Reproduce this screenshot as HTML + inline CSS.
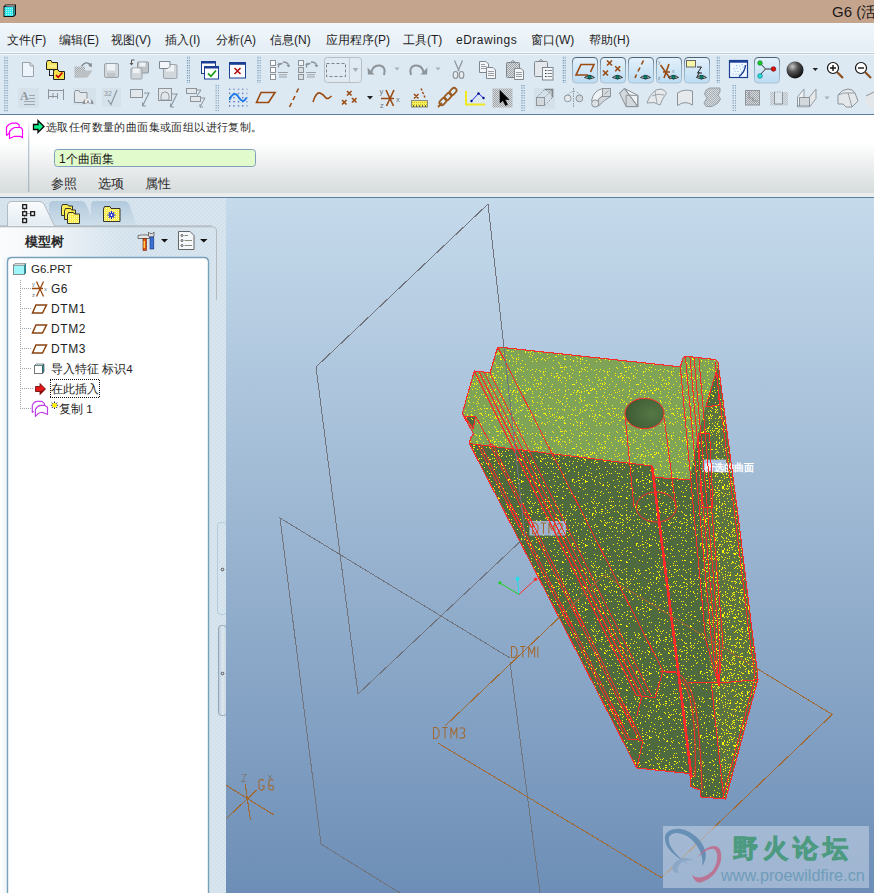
<!DOCTYPE html>
<html><head><meta charset="utf-8">
<style>
*{margin:0;padding:0;box-sizing:border-box}
html,body{width:874px;height:893px;overflow:hidden;background:#fff;font-family:"Liberation Sans",sans-serif;font-size:12px;color:#1e1e1e}
.abs{position:absolute}
#title{left:0;top:0;width:874px;height:23px;background:#c4a48d}
#title span{position:absolute;left:832px;top:3px;font-size:15px;line-height:18px;color:#1a1a1a;white-space:nowrap}
#menu{left:0;top:23px;width:874px;height:29px;background:linear-gradient(#f1f8fc,#e5edf5)}
#menu span{position:absolute;top:10px;font-size:12px;line-height:14px;color:#1e1e1e;white-space:nowrap}
#tb{left:0;top:52px;width:874px;height:63px;background:linear-gradient(#fbfdfe 0,#fbfdfe 1px,#b6cbd9 1px,#b6cbd9 2px,#f4f8fb 2px,#f4f8fb 3px,#dce8f2 3px);border-bottom:1px solid #5b7f9e}
#dash{left:0;top:115px;width:874px;height:83px;background:linear-gradient(#fff 0,#fff 28px,#d6dbdc 78px,#ebeded 78px,#ebeded 82px,#5b7f9e 82px)}
#panel{left:0;top:198px;width:226px;height:695px;background:repeating-linear-gradient(-45deg,#d4e2ec 0,#d4e2ec 4.2px,#e2ecf3 4.2px,#e2ecf3 5.6px)}
#view{left:226px;top:198px;width:648px;height:695px;background:linear-gradient(#c5daeb,#6d8eb6)}
</style></head><body>
<div id="title" class="abs"><span>G6 (活</span></div>
<div id="menu" class="abs">
<span style="left:7px">文件(F)</span>
<span style="left:59px">编辑(E)</span>
<span style="left:111px">视图(V)</span>
<span style="left:165px">插入(I)</span>
<span style="left:216px">分析(A)</span>
<span style="left:270px">信息(N)</span>
<span style="left:326px">应用程序(P)</span>
<span style="left:403px">工具(T)</span>
<span style="left:456px;letter-spacing:0.5px">eDrawings</span>
<span style="left:531px">窗口(W)</span>
<span style="left:589px">帮助(H)</span>
</div>
<div id="tb" class="abs"></div>
<div id="dash" class="abs"></div>
<div id="panel" class="abs"></div>
<div id="view" class="abs"></div>

<svg class="abs" style="left:0;top:0" width="874" height="198" viewBox="0 0 874 198">
<defs>
<pattern id="grip" width="2.2" height="2.5" patternUnits="userSpaceOnUse"><rect x="0" y="0" width="1.1" height="1.1" fill="#5f87a8"/></pattern>
<pattern id="hatch" width="2" height="2" patternUnits="userSpaceOnUse"><rect width="2" height="2" fill="#d6dadd"/><rect width="1" height="1" fill="#9ea4a9"/><rect x="1" y="1" width="1" height="1" fill="#9ea4a9"/></pattern>
<pattern id="ydot" width="2" height="2" patternUnits="userSpaceOnUse"><rect width="2" height="2" fill="#f4ef60"/><rect width="1" height="1" fill="#d8c820"/></pattern>
<linearGradient id="tog" x1="0" y1="0" x2="0" y2="1"><stop offset="0" stop-color="#e4f1fb"/><stop offset="1" stop-color="#bcdcf3"/></linearGradient>
<radialGradient id="sph" cx="0.35" cy="0.3" r="0.7"><stop offset="0" stop-color="#c8c8c8"/><stop offset="0.45" stop-color="#555"/><stop offset="1" stop-color="#111"/></radialGradient>
</defs>
<!-- title icon -->
<pattern id="cyd" width="2" height="2" patternUnits="userSpaceOnUse"><rect width="2" height="2" fill="#30e8ee"/><rect width="1" height="1" fill="#a8f8fa"/></pattern>
<g><path d="M3.5,6.5 L5.5,4.5 H16 V15 L13.5,17 H3.5 Z" fill="#111"/><rect x="4.5" y="7" width="9" height="9" fill="url(#cyd)"/><path d="M5,6.3 L6,5.5 H15 L13.8,6.5 Z" fill="#fff"/><path d="M14,7 L15,6 V14.5 L14,15.5 Z" fill="#2a9aa0"/></g>
<!-- grippers -->
<rect x="4" y="56" width="4.4" height="56" fill="url(#grip)"/>
<rect x="186" y="56" width="4" height="27" fill="url(#grip)"/>
<rect x="257" y="56" width="4" height="27" fill="url(#grip)"/>
<rect x="562" y="56" width="4" height="27" fill="url(#grip)"/>
<rect x="716" y="56" width="4" height="27" fill="url(#grip)"/>
<rect x="215" y="85" width="4" height="26" fill="url(#grip)"/>
<rect x="521" y="85" width="4" height="26" fill="url(#grip)"/>
<rect x="732" y="85" width="4" height="26" fill="url(#grip)"/>
<!-- ROW 1 -->
<g fill="none" stroke-linejoin="round">
<path d="M22.5,62.5 H30 L33.5,66 V76.5 H22.5 Z" fill="#eef4fb" stroke="#9aa2a8"/>
<path d="M30,62.5 V66 H33.5" stroke="#9aa2a8"/>
</g>
<g stroke="#222" stroke-width="1">
<path d="M46.5,62.5 L47.5,60.5 H51 L52,62.5 H57.5 V69.5 H46.5 Z" fill="#f5e35a"/>
<rect x="48.5" y="64.5" width="8" height="3" fill="#f8ee90" stroke="none"/>
<rect x="49.5" y="69.5" width="4" height="6" fill="#e6eef5"/>
<path d="M53.5,71.5 L54.5,69.5 H58 L59,71.5 H64.5 V79.5 H53.5 Z" fill="#f7e24a"/>
</g>
<path d="M56,75 L58.2,77.3 L62.5,72.5" fill="none" stroke="#c80000" stroke-width="1.6"/>
<g>
<path d="M74.5,66.5 H85 V77.5 H74.5 Z" fill="url(#hatch)"/>
<path d="M74.5,77.5 L78.5,70.5 H92.5 L87.5,77.5 Z" fill="#bcc1c5"/>
<path d="M81.5,66 Q86,60.5 90.5,64.5" fill="none" stroke="#7f868c" stroke-width="1.3"/>
<path d="M88,65 L92,63 L91.5,67.5 Z" fill="#7f868c"/>
</g>
<g>
<rect x="104.5" y="63.5" width="14" height="14" rx="1.5" fill="#d2d7db" stroke="#9ba2a8"/>
<rect x="107" y="64" width="8" height="6.5" fill="#eef3f8"/>
<rect x="107" y="73" width="8.5" height="4" fill="#c0c5ca"/>
</g>
<g>
<rect x="137.5" y="62" width="11" height="11" rx="1" fill="#bfc4c9" stroke="#8f969c"/>
<rect x="139.5" y="62.5" width="6" height="4" fill="#eef3f8"/>
<rect x="131" y="68" width="11" height="11" rx="1" fill="#d2d7db" stroke="#9ba2a8"/>
<rect x="133" y="68.5" width="6.5" height="4.5" fill="#eef3f8"/>
<path d="M134.5,60 H131.5 V64" fill="none" stroke="#555" stroke-width="1"/>
<path d="M129.5,63 L131.5,65.5 L133.5,63 Z" fill="#555"/>
</g>
<g>
<rect x="163.5" y="64.5" width="13.5" height="14" rx="1.5" fill="#d2d7db" stroke="#9ba2a8"/>
<rect x="166" y="65" width="8" height="6.5" fill="#eef3f8"/>
<path d="M159.5,61.5 H170 V66.5 L168,68.5 H159.5 Z" fill="#f2f6fa" stroke="#7f868c"/>
</g>
<g>
<rect x="201.5" y="61.5" width="14" height="12" fill="#fff" stroke="#1b3f94"/>
<rect x="201.5" y="61.5" width="14" height="2" fill="#1b3f94"/>
<rect x="204.5" y="66.5" width="14" height="12.5" fill="#fff" stroke="#1b3f94"/>
<rect x="204.5" y="66.5" width="14" height="2" fill="#1b3f94"/>
<path d="M208,73.5 L211,76.3 L216,70.5" fill="none" stroke="#1aa01a" stroke-width="1.8"/>
</g>
<g>
<rect x="229.5" y="62.5" width="16" height="15.5" fill="#fff" stroke="#1b3f94"/>
<rect x="229.5" y="62.5" width="16" height="2.3" fill="#1b3f94"/>
<path d="M234.5,68 L240.5,74 M240.5,68 L234.5,74" stroke="#b01010" stroke-width="1.6"/>
</g>
<g fill="#fff" stroke="#8d949a">
<rect x="270.5" y="60.5" width="5" height="5"/><rect x="270.5" y="67.5" width="5" height="5"/><rect x="270.5" y="74.5" width="5" height="5"/>
<path d="M278,72.5 H288 M279,74.8 H287 M279,77 H287" stroke="#9aa1a6"/>
<path d="M278.5,67.5 Q278,63.5 282.5,63.5 M283,62 Q288,62 288.5,65.5" fill="none" stroke="#8d949a" stroke-width="1.3"/>
<path d="M277,65 L279,62.5 L281,65 Z M286.5,65 L288.5,67.5 L290.5,65Z" fill="#8d949a" stroke="none"/>
</g>
<g fill="#d8dde1" stroke="#8d949a">
<rect x="298.5" y="60.5" width="5" height="5" fill="#f2f5f8"/><rect x="298.5" y="67.5" width="5" height="5"/><rect x="298.5" y="74.5" width="5" height="5"/>
<path d="M306,72.5 H316 M307,74.8 H315 M307,77 H315" stroke="#9aa1a6"/>
<path d="M306.5,67.5 Q306,63.5 310.5,63.5 M311,62 Q316,62 316.5,65.5" fill="none" stroke="#8d949a" stroke-width="1.3"/>
<path d="M305,65 L307,62.5 L309,65 Z M314.5,65 L316.5,67.5 L318.5,65Z" fill="#8d949a" stroke="none"/>
</g>
<g>
<rect x="324.5" y="57.5" width="37" height="25" rx="3" fill="#dfeaf3" stroke="#b7bec4"/>
<rect x="326.5" y="63.5" width="19" height="13" fill="none" stroke="#7d848a" stroke-dasharray="3,2"/>
<path d="M349.5,58 V82" stroke="#c3c9ce"/>
<path d="M352.5,68 H358.5 L355.5,72 Z" fill="#a9b0b5"/>
</g>
<g fill="#8d949a">
<path d="M371,73 Q373,64.5 380,65.5 Q386.5,67 384,75" fill="none" stroke="#8d949a" stroke-width="2"/>
<path d="M367.5,67.5 L368,74.5 L374.5,74.5 Z"/>
<path d="M394.5,67.5 H399.5 L397,70.5 Z" fill="#a9b0b5"/>
<path d="M424,73 Q422,64.5 415,65.5 Q408.5,67 411,75" fill="none" stroke="#8d949a" stroke-width="2"/>
<path d="M427.5,67.5 L427,74.5 L420.5,74.5 Z"/>
<path d="M435.5,67.5 H440.5 L438,70.5 Z" fill="#a9b0b5"/>
</g>
<g fill="none" stroke="#8d949a" stroke-width="1.2">
<path d="M454.5,60.5 L459,71 M462.5,60.5 L458,71"/>
<ellipse cx="455.5" cy="75" rx="2.3" ry="3.5" fill="#e8ecef"/><ellipse cx="461.5" cy="75" rx="2.3" ry="3.5" fill="#e8ecef"/>
</g>
<g fill="#f4f7fa" stroke="#80878d">
<path d="M479.5,61.5 H486 L488.5,64 V72.5 H479.5 Z"/>
<path d="M481,64.5 H485 M481,66.5 H486.5 M481,68.5 H486.5" fill="none" stroke-width="0.8"/>
<path d="M486.5,67.5 H493 L495.5,70 V78.5 H486.5 Z"/>
<path d="M488,71.5 H494 M488,73.5 H494 M488,75.5 H494" fill="none" stroke-width="0.8"/>
</g>
<g stroke="#80878d">
<rect x="506.5" y="62.5" width="13" height="15" rx="1" fill="url(#hatch)"/>
<path d="M510.5,62.5 L513,60.5 L515.5,62.5 Z" fill="#e8ecef"/>
<path d="M514.5,68.5 H521 L523.5,71 V79.5 H514.5 Z" fill="#f4f7fa"/>
<path d="M516,72.5 H522 M516,74.5 H522 M516,76.5 H522" fill="none" stroke-width="0.8"/>
</g>
<g stroke="#80878d">
<rect x="534.5" y="61.5" width="13" height="15" rx="1" fill="#e4e8ec"/>
<path d="M538.5,61.5 L541,59.5 L543.5,61.5 Z" fill="#e8ecef"/>
<rect x="542.5" y="67.5" width="10.5" height="12.5" fill="#f4f7fa"/>
<path d="M545,70.5 h1.5 M545,73.5 h1.5 M545,76.5 h1.5" stroke="#333" fill="none"/>
<path d="M547.5,70.5 H552 M547.5,73.5 H552 M547.5,76.5 H552" fill="none"/>
</g>
<!-- toggle buttons -->
<linearGradient id="tbs" x1="0" y1="0" x2="0" y2="1"><stop offset="0" stop-color="#4d6474"/><stop offset="0.3" stop-color="#8aa3b6"/><stop offset="1" stop-color="#a9c3d6"/></linearGradient>
<g stroke="url(#tbs)" fill="url(#tog)">
<rect x="572.5" y="57.5" width="25" height="25.5" rx="3.5"/>
<rect x="600.5" y="57.5" width="25" height="25.5" rx="3.5"/>
<rect x="628.5" y="57.5" width="25" height="25.5" rx="3.5"/>
<rect x="656.5" y="57.5" width="25" height="25.5" rx="3.5"/>
<rect x="684.5" y="57.5" width="25" height="25.5" rx="3.5"/>
<rect x="754.5" y="57.5" width="25" height="25.5" rx="3.5"/>
</g>
<g fill="none" stroke="#9a4a10" stroke-width="1.6">
<path d="M588,75 H576 L581,64.5 H594 L590.5,72"/>
<path d="M607,60.5 l5,5 m0,-5 l-5,5 M603,70.5 l5,5 m0,-5 l-5,5 M615.2,66.2 l5,5 m0,-5 l-5,5"/>
<path d="M643.5,60.5 L641.5,64.5 M640,67.5 L638,71.5 M636.5,74.5 L635,78"/>
<path d="M663,72 H670 M660.5,65 L670.5,79 M669,64 L664,78"/>
</g>
<g fill="#7a848a" font-family="Liberation Sans" font-size="5">
<text x="658" y="64">y</text><text x="658" y="80">z</text><text x="672" y="73">x</text>
</g>
<rect x="686.5" y="60.5" width="9" height="6.5" fill="#f8f6a8" stroke="#666"/>
<path d="M697,67 H701.5 L697.5,73 H702 M699.5,72 L697,77" fill="none" stroke="#222" stroke-width="1"/>
<g id="eyes">
<g transform="translate(589.5,77)"><path d="M-5,0.5 Q0,-3.5 5,0.5 Q0,3.5 -5,0.5Z" fill="#d8dde0" stroke="#222" stroke-width="0.9"/><circle r="1.9" fill="#0a7a6a" stroke="#033" stroke-width="0.5"/></g>
<g transform="translate(617.5,77)"><path d="M-5,0.5 Q0,-3.5 5,0.5 Q0,3.5 -5,0.5Z" fill="#d8dde0" stroke="#222" stroke-width="0.9"/><circle r="1.9" fill="#0a7a6a" stroke="#033" stroke-width="0.5"/></g>
<g transform="translate(645.5,77)"><path d="M-5,0.5 Q0,-3.5 5,0.5 Q0,3.5 -5,0.5Z" fill="#d8dde0" stroke="#222" stroke-width="0.9"/><circle r="1.9" fill="#0a7a6a" stroke="#033" stroke-width="0.5"/></g>
<g transform="translate(673.5,77)"><path d="M-5,0.5 Q0,-3.5 5,0.5 Q0,3.5 -5,0.5Z" fill="#d8dde0" stroke="#222" stroke-width="0.9"/><circle r="1.9" fill="#0a7a6a" stroke="#033" stroke-width="0.5"/></g>
<g transform="translate(701.5,77)"><path d="M-5,0.5 Q0,-3.5 5,0.5 Q0,3.5 -5,0.5Z" fill="#d8dde0" stroke="#222" stroke-width="0.9"/><circle r="1.9" fill="#0a7a6a" stroke="#033" stroke-width="0.5"/></g>
</g>
<g>
<rect x="729.5" y="60.5" width="18" height="17" fill="#f2f8ff" stroke="#1b3f94" stroke-width="1.2"/>
<rect x="729.5" y="60.5" width="18" height="2.2" fill="#1b3f94"/>
<g fill="#5aa8e8"><circle cx="733" cy="74" r="0.6"/><circle cx="735" cy="71" r="0.6"/><circle cx="737" cy="68" r="0.6"/><circle cx="739.5" cy="66" r="0.6"/><circle cx="742" cy="64.5" r="0.6"/><circle cx="736" cy="74" r="0.6"/><circle cx="738" cy="71.5" r="0.6"/><circle cx="740.5" cy="69" r="0.6"/><circle cx="743" cy="67" r="0.6"/><circle cx="739" cy="74" r="0.6"/><circle cx="741.5" cy="72" r="0.6"/><circle cx="744" cy="70" r="0.6"/><circle cx="734" cy="68.5" r="0.6"/><circle cx="736.5" cy="65.5" r="0.6"/></g>
<path d="M739,76.5 Q745,72 745.5,65" fill="none" stroke="#1b3f94" stroke-width="1.4"/>
</g>
<g>
<path d="M760,63 L765.5,69 L772.5,69 M765.5,69 L760,75" fill="none" stroke="#333" stroke-width="1"/>
<circle cx="760" cy="63" r="2.3" fill="#1ed01e" stroke="#064" stroke-width="0.6"/>
<circle cx="773.5" cy="69" r="2.3" fill="#e01010" stroke="#600" stroke-width="0.6"/>
<circle cx="760" cy="76" r="2.3" fill="#20e0e0" stroke="#066" stroke-width="0.6"/>
</g>
<circle cx="795" cy="70" r="8.5" fill="url(#sph)"/>
<path d="M812.5,68 H818 L815.3,71 Z" fill="#222"/>
<g fill="#fff" stroke="#111" stroke-width="1.2">
<circle cx="833" cy="68" r="5.5"/><path d="M830,68 H836 M833,65 V71" stroke-width="1.4"/>
<path d="M837,72 L843,78" stroke="#8a5020" stroke-width="2.2"/>
<circle cx="861" cy="68" r="5.5"/><path d="M858,68 H864" stroke-width="1.4"/>
<path d="M865,72 L871,78" stroke="#8a5020" stroke-width="2.2"/>
</g>
<!-- ROW 2 -->
<g>
<rect x="18" y="88" width="21" height="20" fill="#d6e2eb"/>
<text x="20" y="100" font-family="Liberation Serif" font-weight="bold" font-size="12" fill="#8f969b">A</text>
<path d="M29,95.5 H35 M29,98.5 H35 M24,101.5 H35 M24,104.5 H35" stroke="#a0a7ac" stroke-width="1"/>
</g>
<g stroke="#8d949a" stroke-width="1" fill="none">
<path d="M48.5,89 V99 M63.5,89 V100 M48.5,90.5 H63.5 M48.5,96.5 H57.5 M53,93 V98 M57.5,93 V99"/>
</g>
<g>
<rect x="73" y="88" width="23" height="17" fill="#d6e2eb"/>
<path d="M74.5,92.5 L75.5,90.5 H79 L80,92.5 H87 V102.5 H74.5 Z" fill="#e2e7eb" stroke="#8d949a"/>
<path d="M82.5,104 A5.5,5.5 0 0 1 93.5,104 Z" fill="#8d949a"/>
<circle cx="88" cy="101.5" r="3" fill="#f4f6f8"/>
<text x="86.2" y="103.5" font-size="5" fill="#555" font-family="Liberation Sans">A</text>
</g>
<g>
<rect x="102" y="88" width="19" height="19" fill="#d6e2eb"/>
<text x="104" y="96" font-size="7" fill="#8d949a" font-family="Liberation Sans">32</text>
<path d="M108,100 L111,104.5 L117,90" fill="none" stroke="#8d949a" stroke-width="1.2"/>
</g>
<g stroke="#8d949a" fill="#e2e7eb">
<rect x="130.5" y="89.5" width="12" height="8"/>
<path d="M144,93 H149 L142.5,106 M142.5,106 V102.5 M142.5,106 H146" fill="none" stroke-width="1.1"/>
<rect x="158.5" y="88.5" width="13" height="12"/>
<path d="M161,96 a3.5,3.5 0 0 1 8,0 v4 h-8z" fill="none" stroke-width="0.9"/>
<path d="M172,94 H177 L170.5,107 M170.5,107 V103.5 M170.5,107 H174" fill="none" stroke-width="1.1"/>
<rect x="186.5" y="88.5" width="10" height="5"/>
<rect x="190.5" y="96.5" width="10" height="5"/>
<path d="M197,90 H201 L197,96 M201,98 H205 L200,107 M200,107 V104 M200,107 H203" fill="none" stroke-width="1"/>
</g>
<g>
<pattern id="bdot" width="4.4" height="4.2" patternUnits="userSpaceOnUse" x="229" y="88.5"><rect width="1.2" height="1.2" fill="#2a4ab0"/></pattern>
<rect x="229" y="88.5" width="18.5" height="18.5" fill="url(#bdot)"/>
<path d="M229.5,100 Q233,91 237.5,95.5 Q241,101 243,101 Q245,101 246.5,97.5" fill="none" stroke="#1e7ae8" stroke-width="1.8"/>
</g>
<g fill="none" stroke="#9a4a10" stroke-width="1.6">
<path d="M261,92.5 H275 L268.5,102.5 H256.5 Z"/>
<path d="M298.5,88.5 L296.5,92.5 M295,96 L293,100 M291.5,103 L289.5,107"/>
<path d="M313,102 Q316,92 320,93 Q323,94 326,98 Q328,99.5 331.5,96"/>
<path d="M347,91 l4.5,4.5 m0,-4.5 l-4.5,4.5 M342,100 l4.5,4.5 m0,-4.5 l-4.5,4.5 M352,98 l4.5,4.5 m0,-4.5 l-4.5,4.5"/>
<path d="M381,98.5 H394 M386,90 L393.5,106 M394,90 L386.5,106" />
</g>
<path d="M367,96 H373 L370,99.5 Z" fill="#222"/>
<g fill="#6f777d" font-family="Liberation Sans" font-size="7.5"><text x="379.5" y="94">y</text><text x="380" y="108">z</text><text x="396" y="101.5">x</text></g>
<g>
<rect x="411.5" y="100.5" width="16" height="6.5" fill="url(#ydot)" stroke="#777" stroke-width="0.8"/>
<path d="M413.5,107 v-2 M416.5,107 v-2 M419.5,107 v-2 M422.5,107 v-2 M425.5,107 v-2" stroke="#333" stroke-width="0.7"/>
<path d="M414,94 l4.5,4.5 m0,-4.5 l-4.5,4.5 M421,88.5 l1,2 M422.5,92 l1,2 M424,95.5 l1,2" stroke="#9a4a10" stroke-width="1.5" fill="none"/>
</g>
<g fill="none" stroke="#9a5a20" stroke-width="1.8">
<path d="M438,107 L442,103"/><rect x="439" y="99" width="8" height="5" rx="2.5" transform="rotate(-45 443 101.5)"/>
<rect x="444" y="94" width="8" height="5" rx="2.5" transform="rotate(-45 448 96.5)"/>
<rect x="449" y="89" width="8" height="5" rx="2.5" transform="rotate(-45 453 91.5)"/>
</g>
<g>
<path d="M466,91 V104.5 H485" fill="none" stroke="#f0e820" stroke-width="2"/>
<path d="M471.5,101 L478.5,93.5 L483.5,98" fill="none" stroke="#1a2ae0" stroke-width="1"/>
<circle cx="471.5" cy="101" r="1.2" fill="#001080"/><circle cx="478.5" cy="93.5" r="1.2" fill="#001080"/><circle cx="483.5" cy="98" r="1.2" fill="#001080"/>
</g>
<g>
<rect x="492.5" y="88.5" width="20" height="19" fill="url(#hatch)"/>
<path d="M500,90.5 V103 L503,100.5 L505.5,105.5 L507.5,104.5 L505,99.5 L509,99.5 Z" fill="#000" stroke="#000" stroke-width="0.6"/>
</g>
<g stroke="#8d949a" stroke-width="1" fill="#d3d8dc">
<rect x="534" y="88" width="21" height="21" fill="#d5e1ea" stroke="none"/>
<path d="M544.5,89.5 H552.5 V97.5 Z" fill="url(#hatch)" stroke="none" opacity="0.6"/>
<path d="M544.5,89.5 H552.5 V97.5" fill="none" stroke="#7f868c" stroke-width="1.6"/>
<path d="M536.5,97.5 L544.5,89.5 M544.5,105.5 L552.5,97.5 M544.5,97.5 L552.5,89.5" fill="none" stroke-dasharray="1.5,1.5"/>
<rect x="536.5" y="97.5" width="8" height="8"/>
<path d="M573.5,88 V107.5" fill="none" stroke-dasharray="1.5,1"/>
<circle cx="567.7" cy="98.4" r="3.4" fill="#e6eaed"/>
<circle cx="579.4" cy="98.4" r="3.4"/>
<path d="M567.7,95 Q572,90 576.5,92 M577,92.5 Q581,94 580.5,96" fill="none" stroke-dasharray="1.2,1.2"/>
<path d="M591.5,101 Q593,91 602.5,88.5 V96.5 Q597,98 598.5,104 Z" fill="#eef2f5"/>
<path d="M598.5,104 Q597,98 602.5,96.5 H610.5 Q604,100 598.5,106 Z" fill="#d3d8dc"/>
<rect x="602.5" y="88.5" width="8" height="8" fill="#d3d8dc"/>
<path d="M604.5,94.5 L608.5,90.5" fill="none" stroke-width="0.8"/>
<circle cx="595.2" cy="103.5" r="3.6" fill="#dde1e4"/>
<path d="M619.6,93.2 L624.4,88.4 L626.1,95.3 Z" fill="#e4e8eb"/>
<path d="M624.4,88.4 L637.8,95.3 V106.6 Z" fill="#eef2f5"/>
<path d="M619.6,93.2 L626.1,106.6 H637.8 L624.4,88.4 Z" fill="#d3d8dc"/>
<path d="M626.1,95.3 H637.8 V106.6 H626.1 Z M624.4,88.4 L637.8,106.6" fill="none"/>
<path d="M647,103 Q650,94 656,90 L661,89 Q665,90 666.5,93 Q662,99 660,105 Q654,101 647,103 Z" fill="#e6eaed" stroke-width="0.9"/>
<path d="M652,96 Q658,93 664,95 M655,91 Q656,98 657,103" fill="none" stroke-width="0.8"/>
<path d="M677.5,105.5 V93 Q684,88.5 692.5,91 V105 Q685,100 677.5,105.5 Z" fill="#e6eaed" stroke-dasharray="none"/>
<path d="M706,90 L710,88 H720 V92 L718,95 L720.5,99 L718,103 L712,106.5 H706 L704,103 L707,98 L704.5,94 Z" fill="url(#hatch)" opacity="0.85"/>
<rect x="745.5" y="90.5" width="14" height="14.5" fill="url(#hatch)"/>
<path d="M749,92 V98 H753 V101 H758" fill="none" stroke="#8d949a" stroke-width="1.2"/>
<rect x="770" y="92" width="18" height="13.5" fill="url(#hatch)" stroke="none" opacity="0.55"/>
<path d="M774.5,92 V104 H782.5 V92" fill="#dbe5ec" stroke="#8d949a"/>
<path d="M774.5,92 H782.5" stroke-dasharray="1,1.5" fill="none"/>
<path d="M797.5,97 L804,89 V98.5 L797.5,107 Z" fill="#eef2f5" stroke-width="0.9"/>
<path d="M809.5,97 L816,89 V98.5 L809.5,107 Z" fill="#e4e8eb" stroke-width="0.9"/>
<rect x="799.5" y="97.5" width="10" height="8.5" fill="#d3d8dc"/>
<path d="M797.5,107 H809.5 M797.5,97 V107" fill="none" stroke-dasharray="1,1"/>
<path d="M838,95 Q842,89 848,89 Q853,89 855,93 L858,101 L852,107 H846 L843,104 H838 Z" fill="#e4e8eb"/>
<path d="M838,95 Q844,92 848,93 L852,107 M848,93 L855,93" fill="none" stroke-width="0.9"/>
<path d="M866,95 L874,91 V107 H866 Z" fill="#e3e7ea" stroke="none"/>
<path d="M866,96 L874,92" fill="none"/>
</g>
<path d="M824.5,96.5 H829.5 L827,99.5 Z" fill="#a9b0b5"/>
</svg>

<svg class="abs" style="left:0;top:115px" width="260" height="80" viewBox="0 115 260 80">
<defs><linearGradient id="sep" x1="0" y1="0" x2="0" y2="1"><stop offset="0" stop-color="#fff"/><stop offset="0.3" stop-color="#b9c9d6"/><stop offset="1" stop-color="#a9b8c4"/></linearGradient></defs>
<g fill="none" stroke="#ff00ff" stroke-width="1.2" stroke-linejoin="round">
<path d="M6.5,135.5 V127 L8.5,124.8 L11.5,123.2 H17 L19.2,125 V127.3"/>
<path d="M9.5,138.5 V131.5 L11.5,129.3 L14.5,127.5 H20.8 L22.5,129.3 V137.8 L20.5,136.3 H14.5 L11.8,137.5 Z"/>
<path d="M6.5,135.5 L9.5,133"/>
</g>
<rect x="28" y="120" width="1.3" height="72" fill="url(#sep)"/>
<path d="M33.5,124.5 H38 V120.5 L44,126.5 L38,132.5 V129.5 H33.5 Z" fill="#12ee8a" stroke="#000" stroke-width="1.3" stroke-linejoin="miter"/>
<rect x="54.5" y="149.5" width="201" height="17" rx="3" fill="#e2fbcc" stroke="#7e9fb9"/>
</svg>
<div class="abs" style="left:46px;top:120px;font-size:11px;letter-spacing:0.4px;line-height:14px;color:#2a2a2a;white-space:nowrap">选取任何数量的曲面集或面组以进行复制。</div>
<div class="abs" style="left:59px;top:151.5px;font-size:12px;line-height:14px;color:#1a1a1a;white-space:nowrap">1个曲面集</div>
<div class="abs" style="left:51px;top:176px;font-size:13px;line-height:15px;color:#2a2a2a;white-space:nowrap">参照</div>
<div class="abs" style="left:98px;top:176px;font-size:13px;line-height:15px;color:#2a2a2a;white-space:nowrap">选项</div>
<div class="abs" style="left:145px;top:176px;font-size:13px;line-height:15px;color:#2a2a2a;white-space:nowrap">属性</div>

<svg class="abs" style="left:0;top:198px" width="226" height="695" viewBox="0 198 226 695">
<defs>
<linearGradient id="acttab" x1="0" y1="0" x2="0" y2="1"><stop offset="0" stop-color="#fafcfd"/><stop offset="1" stop-color="#e3ecf2"/></linearGradient>
<linearGradient id="inacttab" x1="0" y1="0" x2="0" y2="1"><stop offset="0" stop-color="#b3cadd"/><stop offset="1" stop-color="#cfdfeb"/></linearGradient>
<linearGradient id="hdr" x1="0" y1="0" x2="1" y2="0"><stop offset="0" stop-color="#fbfcfd"/><stop offset="0.25" stop-color="#f4f7f9" stop-opacity="0.9"/><stop offset="0.6" stop-color="#e6eef4" stop-opacity="0"/></linearGradient>
<linearGradient id="lefted" x1="0" y1="0" x2="1" y2="0"><stop offset="0" stop-color="#fff"/><stop offset="1" stop-color="#eef3f7"/></linearGradient>
<linearGradient id="sash2" x1="0" y1="0" x2="1" y2="0"><stop offset="0" stop-color="#b9cbd8"/><stop offset="0.5" stop-color="#dce7ef"/><stop offset="1" stop-color="#c7d7e3"/></linearGradient>
<pattern id="stripe" width="4" height="4" patternUnits="userSpaceOnUse"><rect width="4" height="4" fill="#d2e1ec"/><path d="M0 3h1v1h-1zM1 2h1v1h-1zM2 1h1v1h-1zM3 0h1v1h-1z" fill="#dde9f1"/></pattern>
<pattern id="tdot" width="2" height="2" patternUnits="userSpaceOnUse"><rect width="1" height="1" fill="#9aa4ab"/></pattern>
<pattern id="fold" width="2" height="2" patternUnits="userSpaceOnUse"><rect width="2" height="2" fill="#f8ec50"/><rect width="1" height="1" fill="#fffbb0"/></pattern>
</defs>
<rect x="0" y="198" width="226" height="695" fill="url(#stripe)"/>
<!-- tabs -->
<path d="M91,226 V205 Q91,201 95,201 H124 Q127,201 129,204 L137,226 Z" fill="url(#inacttab)"/>
<path d="M49,226 V205 Q49,201 53,201 H81 Q84,201 86,204 L95,226 Z" fill="url(#inacttab)"/>
<path d="M7.5,226 V206 Q7.5,201.5 12,201.5 H39 Q42,201.5 44,204 L54.5,226" fill="url(#acttab)" stroke="#b3bcc3"/>
<rect x="0" y="225.5" width="212" height="1.2" fill="#a9b2b9"/>
<rect x="8" y="225" width="46" height="1" fill="#eef3f6"/>
<g fill="#fff" stroke="#222" stroke-width="1.4">
<path d="M24.5,208.5 V219 M26.5,213.5 H30.5" stroke="#999" stroke-width="1"/>
<rect x="22.7" y="204.7" width="3.8" height="3.8"/><rect x="22.7" y="211.7" width="3.8" height="3.8"/><rect x="30.7" y="211.7" width="3.8" height="3.8"/><rect x="22.7" y="218.7" width="3.8" height="3.8"/>
</g>
<g stroke="#222" stroke-width="0.9">
<path d="M61.5,207 L62.5,204.5 H67.5 L68.5,206 H72.5 V215.5 H61.5 Z" fill="#f8ec50"/>
<path d="M64.5,211 L65.5,208.5 H70.5 L71.5,210 H75.5 V219.5 H64.5 Z" fill="#f8ec50"/>
<path d="M67.5,215 L68.5,212.5 H73.5 L74.5,214 H79.5 V223.5 H67.5 Z" fill="url(#fold)"/>
<path d="M103.5,209 L104.5,206.5 H110 L111,208.5 H120 V221.5 H103.5 Z" fill="url(#fold)"/>
</g>
<path d="M62,207.5 H62.5 M65,211.5 H65.5 M68,215.5H68.5" stroke="#fff" stroke-width="1.5"/>
<g stroke="#0a1ae0" stroke-width="1.1"><path d="M111.5,211 V219 M107.5,215 H115.5 M108.8,212.3 L114.2,217.7 M114.2,212.3 L108.8,217.7"/></g>
<circle cx="111.5" cy="215" r="1.5" fill="#fff" stroke="#0a1ae0"/>
<!-- header -->
<rect x="0" y="227" width="216" height="30" fill="url(#hdr)"/>
<path d="M0,226.8 H212 Q216.5,226.8 216.5,231 V300" fill="none" stroke="#b4bcc2" stroke-width="1"/>
<rect x="0" y="257" width="7" height="636" fill="url(#lefted)"/>
<!-- tree box -->
<path d="M7.5,893 V262 Q7.5,257.5 12,257.5 H204 Q208.5,257.5 208.5,262 V893" fill="#fff" stroke="#77a0ba" stroke-width="1.4"/>
<!-- sash handles -->
<rect x="217.5" y="522.5" width="9" height="92" rx="3" fill="none" stroke="#b6cde0"/>
<circle cx="222.5" cy="569.5" r="1.3" fill="none" stroke="#333" stroke-width="0.8"/>
<rect x="218.5" y="625.5" width="8" height="90" rx="3" fill="url(#sash2)" stroke="#93a8b8"/>
<circle cx="222.5" cy="673.5" r="1.3" fill="none" stroke="#333" stroke-width="0.8"/>
<!-- header icons -->
<g>
<path d="M138,235.5 Q141,234.5 149.5,235 V238.5 H138 Z" fill="#e6e6e6" stroke="#555" stroke-width="0.8"/>
<rect x="143" y="238.5" width="3.5" height="12" fill="#e05010" stroke="#6a2a10" stroke-width="0.6"/>
<rect x="143.6" y="241" width="1.4" height="7" fill="#ffd040"/>
<path d="M148.5,236 V232 L150,233.5 H152.5 L154,232 V236 L153,237 H149.5 Z" fill="#ddd" stroke="#555" stroke-width="0.8"/>
<rect x="150" y="237" width="3.8" height="12" fill="#3a70d8" stroke="#1a3070" stroke-width="0.6"/>
<path d="M161,239 H168 L164.5,242.5 Z" fill="#111"/>
<path d="M178.5,231.5 H190 L194,235.5 V249.5 H178.5 Z" fill="#f4f8fc" stroke="#555" stroke-width="0.9"/>
<g stroke="#333" stroke-width="0.8" fill="none"><circle cx="182" cy="235.5" r="1"/><circle cx="182" cy="240.5" r="1"/><circle cx="182" cy="245.5" r="1"/></g>
<path d="M184.5,235.5 H188 M184.5,240.5 H192 M184.5,245.5 H192" stroke="#8a8a7a" stroke-width="1"/>
<path d="M200,239 H207.5 L203.8,242.5 Z" fill="#111"/>
</g>
<!-- tree lines -->
<rect x="20" y="280" width="1" height="129" fill="url(#tdot)"/>
<rect x="21" y="288" width="10" height="1" fill="url(#tdot)"/>
<rect x="21" y="308" width="10" height="1" fill="url(#tdot)"/>
<rect x="21" y="328" width="10" height="1" fill="url(#tdot)"/>
<rect x="21" y="348" width="10" height="1" fill="url(#tdot)"/>
<rect x="21" y="368" width="10" height="1" fill="url(#tdot)"/>
<rect x="21" y="388" width="12" height="1" fill="url(#tdot)"/>
<rect x="21" y="408" width="10" height="1" fill="url(#tdot)"/>
<!-- tree icons -->
<g>
<path d="M13.5,265 L15,263.5 H26 V273 L24.5,274.5 H13.5 Z" fill="#999"/>
<rect x="13.5" y="265" width="11" height="9.5" fill="#9ff6f8" stroke="#777" stroke-width="0.8"/>
<path d="M13.5,265 L15,263.5 H26 L24.5,265 Z" fill="#fff" stroke="#777" stroke-width="0.6"/>
<path d="M24.5,265 L26,263.5 V273 L24.5,274.5Z" fill="#188a90"/>
</g>
<g stroke="#9a4a10" stroke-width="1.3" fill="none">
<path d="M32,288.5 H43 M36.5,281.5 L43.5,296.5 M43.5,281.5 L36.5,296.5"/>
</g>
<g fill="#6a7278" font-family="Liberation Sans" font-size="6"><text x="32" y="286">y</text><text x="32" y="297">z</text><text x="44" y="291">x</text></g>
<g stroke="#8a4410" stroke-width="1.5" fill="none">
<path d="M36,305 H46.5 L42.5,313 H32.5 Z"/>
<path d="M36,325 H46.5 L42.5,333 H32.5 Z"/>
<path d="M36,345 H46.5 L42.5,353 H32.5 Z"/>
</g>
<g>
<rect x="34.5" y="365.5" width="8" height="8" fill="#fff" stroke="#666" stroke-width="0.9"/>
<path d="M34.5,365.5 L36,364 H44 L42.5,365.5Z" fill="#bff" stroke="#666" stroke-width="0.7"/>
<path d="M42.5,365.5 L44,364 V372 L42.5,373.5Z" fill="#1a9aa0" stroke="#444" stroke-width="0.6"/>
</g>
<path d="M35.5,386.5 H40 V383.5 L45.5,389 L40,394.5 V391.5 H35.5 Z" fill="#e01818" stroke="#600" stroke-width="0.8"/>
<path d="M40,391.5 V394.5 L45.5,389" fill="#7a0a0a"/>
<pattern id="fdot" width="2" height="1" patternUnits="userSpaceOnUse"><rect width="1" height="1" fill="#111"/></pattern><pattern id="fdotv" width="1" height="2" patternUnits="userSpaceOnUse"><rect width="1" height="1" fill="#111"/></pattern>
<rect x="50" y="379" width="50" height="1" fill="url(#fdot)"/>
<rect x="50" y="397" width="50" height="1" fill="url(#fdot)"/>
<rect x="50" y="379" width="1" height="19" fill="url(#fdotv)"/>
<rect x="99" y="380" width="1" height="18" fill="url(#fdotv)"/>
<g fill="none" stroke="#c040e8" stroke-width="1.2" stroke-linejoin="round">
<path d="M33.8,411.4 L32.3,412.3 V405.3 Q34,401.3 37.3,401.3 H41.6 L44.5,403.6 V405.3"/>
<path d="M35.4,416.4 V409.4 Q37,406 40.5,405.3 H44.5 L47.5,407.3 V414.5 L45.5,413.5 Q42,412 40.5,412.5 Q38,413 35.4,416.4 Z"/>
</g>
<g stroke="#1a2a5a" stroke-width="1"><path d="M54.5,401.5 V409 M50.8,405.3 H58.2 M51.8,402.6 L57.2,408 M57.2,402.6 L51.8,408"/></g>
<circle cx="54.5" cy="405.3" r="2.4" fill="#ffee00"/>
</svg>
<div class="abs" style="left:25px;top:234px;font-size:13px;line-height:15px;font-weight:bold;color:#2a2a2a;white-space:nowrap">模型树</div>
<div class="abs" style="left:31px;top:262px;font-size:11.5px;line-height:14px;color:#1e1e1e;white-space:nowrap">G6.PRT</div>
<div class="abs" style="left:51px;top:282px;font-size:12px;letter-spacing:0.3px;line-height:14px;color:#1e1e1e;white-space:nowrap">G6</div>
<div class="abs" style="left:51px;top:302px;font-size:12px;letter-spacing:0.6px;line-height:14px;color:#1e1e1e;white-space:nowrap">DTM1</div>
<div class="abs" style="left:51px;top:322px;font-size:12px;letter-spacing:0.6px;line-height:14px;color:#1e1e1e;white-space:nowrap">DTM2</div>
<div class="abs" style="left:51px;top:342px;font-size:12px;letter-spacing:0.6px;line-height:14px;color:#1e1e1e;white-space:nowrap">DTM3</div>
<div class="abs" style="left:51px;top:362px;font-size:11.5px;line-height:14px;color:#1e1e1e;white-space:nowrap">导入特征 标识4</div>
<div class="abs" style="left:51px;top:382px;font-size:11.5px;line-height:14px;color:#1e1e1e;white-space:nowrap">在此插入</div>
<div class="abs" style="left:59px;top:402px;font-size:11.5px;line-height:14px;color:#1e1e1e;white-space:nowrap">复制 1</div>

<svg class="abs" style="left:226px;top:198px" width="648" height="695" viewBox="226 198 648 695">
<defs>
<pattern id="dk" width="64" height="64" patternUnits="userSpaceOnUse"><rect width="64" height="64" fill="#4e6a3e"/><path fill="#ffff00" d="M41 19h1v1h-1zM50 6h1v1h-1zM9 12h1v1h-1zM46 7h1v1h-1zM27 4h1v1h-1zM11 55h1v1h-1zM53 8h1v1h-1zM30 11h1v1h-1zM54 7h1v1h-1zM15 28h1v1h-1zM7 50h1v1h-1zM6 28h1v1h-1zM5 17h1v1h-1zM37 53h1v1h-1zM18 15h1v1h-1zM39 23h1v1h-1zM13 24h1v1h-1zM47 12h1v1h-1zM8 7h1v1h-1zM26 63h1v1h-1zM54 40h1v1h-1zM59 58h1v1h-1zM46 38h1v1h-1zM31 23h1v1h-1zM31 10h1v1h-1zM38 63h1v1h-1zM43 57h1v1h-1zM36 9h1v1h-1zM15 53h1v1h-1zM21 43h1v1h-1zM19 62h1v1h-1zM53 5h1v1h-1zM9 40h1v1h-1zM43 44h1v1h-1zM63 58h1v1h-1zM8 11h1v1h-1zM34 60h1v1h-1zM8 7h1v1h-1zM39 57h1v1h-1zM36 49h1v1h-1zM44 2h1v1h-1zM59 45h1v1h-1zM21 14h1v1h-1zM63 7h1v1h-1zM27 36h1v1h-1zM16 31h1v1h-1zM50 50h1v1h-1zM63 10h1v1h-1zM21 57h1v1h-1zM51 35h1v1h-1zM17 55h1v1h-1zM35 53h1v1h-1zM45 48h1v1h-1zM29 19h1v1h-1zM10 22h1v1h-1zM19 29h1v1h-1zM29 1h1v1h-1zM62 23h1v1h-1zM33 36h1v1h-1zM0 18h1v1h-1zM53 47h1v1h-1zM40 16h1v1h-1zM6 58h1v1h-1zM50 50h1v1h-1zM51 50h1v1h-1zM13 61h1v1h-1zM51 7h1v1h-1zM24 8h1v1h-1zM26 56h1v1h-1zM20 14h1v1h-1zM43 6h1v1h-1zM13 0h1v1h-1zM19 12h1v1h-1zM46 3h1v1h-1zM9 26h1v1h-1zM48 19h1v1h-1zM32 44h1v1h-1zM46 60h1v1h-1zM15 14h1v1h-1zM62 59h1v1h-1zM61 61h1v1h-1zM39 10h1v1h-1zM18 13h1v1h-1zM43 33h1v1h-1zM61 20h1v1h-1zM2 26h1v1h-1zM46 18h1v1h-1zM3 38h1v1h-1zM11 33h1v1h-1zM46 21h1v1h-1zM45 28h1v1h-1zM42 28h1v1h-1zM24 30h1v1h-1zM51 29h1v1h-1zM25 63h1v1h-1zM45 3h1v1h-1zM3 35h1v1h-1zM60 33h1v1h-1zM24 44h1v1h-1zM57 44h1v1h-1zM46 10h1v1h-1zM28 13h1v1h-1zM29 60h1v1h-1zM25 43h1v1h-1zM26 61h1v1h-1zM0 61h1v1h-1zM44 10h1v1h-1zM15 49h1v1h-1zM25 61h1v1h-1zM22 55h1v1h-1zM42 11h1v1h-1zM50 59h1v1h-1zM51 10h1v1h-1zM20 21h1v1h-1zM16 3h1v1h-1zM19 59h1v1h-1zM18 60h1v1h-1zM44 19h1v1h-1zM16 2h1v1h-1zM1 13h1v1h-1zM17 55h1v1h-1zM24 27h1v1h-1zM3 32h1v1h-1zM27 37h1v1h-1zM30 41h1v1h-1zM33 53h1v1h-1zM16 7h1v1h-1zM45 58h1v1h-1zM53 16h1v1h-1zM19 2h1v1h-1zM56 23h1v1h-1zM0 19h1v1h-1zM22 18h1v1h-1zM60 15h1v1h-1zM7 41h1v1h-1zM61 13h1v1h-1zM7 31h1v1h-1zM24 35h1v1h-1zM5 12h1v1h-1zM57 3h1v1h-1zM8 56h1v1h-1zM41 25h1v1h-1zM35 57h1v1h-1zM61 31h1v1h-1zM33 25h1v1h-1zM57 17h1v1h-1zM53 15h1v1h-1zM50 56h1v1h-1zM40 9h1v1h-1zM30 54h1v1h-1zM9 27h1v1h-1zM38 15h1v1h-1zM19 46h1v1h-1zM18 32h1v1h-1zM17 59h1v1h-1zM28 12h1v1h-1zM50 62h1v1h-1zM20 28h1v1h-1zM20 55h1v1h-1zM51 43h1v1h-1zM53 25h1v1h-1zM45 40h1v1h-1zM11 46h1v1h-1zM2 43h1v1h-1zM58 56h1v1h-1zM2 49h1v1h-1zM42 37h1v1h-1zM8 14h1v1h-1zM29 13h1v1h-1zM10 33h1v1h-1zM34 5h1v1h-1zM23 34h1v1h-1zM16 54h1v1h-1zM33 51h1v1h-1zM19 63h1v1h-1zM41 11h1v1h-1zM35 7h1v1h-1zM23 54h1v1h-1zM9 34h1v1h-1zM2 11h1v1h-1zM33 10h1v1h-1zM28 8h1v1h-1zM33 15h1v1h-1zM58 1h1v1h-1zM43 53h1v1h-1zM34 16h1v1h-1zM5 30h1v1h-1zM14 20h1v1h-1zM33 6h1v1h-1zM23 25h1v1h-1zM39 39h1v1h-1zM26 37h1v1h-1zM57 22h1v1h-1zM34 44h1v1h-1zM2 32h1v1h-1zM4 1h1v1h-1zM2 24h1v1h-1zM60 31h1v1h-1zM57 13h1v1h-1zM55 63h1v1h-1zM50 39h1v1h-1zM27 29h1v1h-1zM43 25h1v1h-1zM17 51h1v1h-1zM44 6h1v1h-1zM16 1h1v1h-1zM9 32h1v1h-1zM55 20h1v1h-1zM7 10h1v1h-1zM48 36h1v1h-1zM31 37h1v1h-1zM5 58h1v1h-1zM23 20h1v1h-1zM34 57h1v1h-1zM0 33h1v1h-1zM46 42h1v1h-1zM41 31h1v1h-1zM4 39h1v1h-1zM27 45h1v1h-1zM23 0h1v1h-1zM42 48h1v1h-1zM10 60h1v1h-1zM35 25h1v1h-1zM31 0h1v1h-1zM11 33h1v1h-1zM11 18h1v1h-1zM51 5h1v1h-1zM50 2h1v1h-1zM38 38h1v1h-1zM29 10h1v1h-1zM19 49h1v1h-1zM41 63h1v1h-1zM19 36h1v1h-1zM18 5h1v1h-1zM54 17h1v1h-1zM2 29h1v1h-1zM10 3h1v1h-1zM5 17h1v1h-1zM46 13h1v1h-1zM48 57h1v1h-1zM6 2h1v1h-1zM31 62h1v1h-1zM33 0h1v1h-1zM58 8h1v1h-1zM11 8h1v1h-1zM60 32h1v1h-1zM9 33h1v1h-1zM30 26h1v1h-1zM29 58h1v1h-1zM63 48h1v1h-1zM9 61h1v1h-1zM36 5h1v1h-1zM25 9h1v1h-1zM18 42h1v1h-1zM32 38h1v1h-1zM17 1h1v1h-1zM61 7h1v1h-1zM62 34h1v1h-1zM12 27h1v1h-1zM62 37h1v1h-1zM36 59h1v1h-1zM59 59h1v1h-1zM15 25h1v1h-1zM39 10h1v1h-1zM60 2h1v1h-1zM37 58h1v1h-1zM9 57h1v1h-1zM34 49h1v1h-1zM26 26h1v1h-1zM9 11h1v1h-1zM18 33h1v1h-1zM46 16h1v1h-1zM35 14h1v1h-1zM46 29h1v1h-1zM63 62h1v1h-1zM50 3h1v1h-1zM20 0h1v1h-1zM62 57h1v1h-1zM51 38h1v1h-1zM18 53h1v1h-1zM44 48h1v1h-1zM40 15h1v1h-1zM42 0h1v1h-1zM41 43h1v1h-1zM50 15h1v1h-1zM25 1h1v1h-1zM37 32h1v1h-1zM47 8h1v1h-1zM50 49h1v1h-1zM9 46h1v1h-1zM54 35h1v1h-1zM6 35h1v1h-1zM13 6h1v1h-1zM36 19h1v1h-1zM31 34h1v1h-1zM55 40h1v1h-1zM24 47h1v1h-1zM54 3h1v1h-1zM51 26h1v1h-1zM10 6h1v1h-1z"/></pattern>
<pattern id="lt" width="64" height="64" patternUnits="userSpaceOnUse"><rect width="64" height="64" fill="#80a457"/><path fill="#ffff00" d="M52 57h1v1h-1zM17 36h1v1h-1zM62 6h1v1h-1zM16 21h1v1h-1zM60 53h1v1h-1zM43 36h1v1h-1zM38 32h1v1h-1zM33 51h1v1h-1zM30 38h1v1h-1zM61 50h1v1h-1zM15 21h1v1h-1zM20 9h1v1h-1zM26 63h1v1h-1zM28 57h1v1h-1zM42 57h1v1h-1zM54 17h1v1h-1zM24 31h1v1h-1zM11 22h1v1h-1zM43 11h1v1h-1zM40 30h1v1h-1zM47 33h1v1h-1zM25 2h1v1h-1zM52 49h1v1h-1zM52 26h1v1h-1zM48 34h1v1h-1zM43 7h1v1h-1zM63 35h1v1h-1zM46 16h1v1h-1zM27 11h1v1h-1zM34 31h1v1h-1zM49 51h1v1h-1zM57 55h1v1h-1zM39 2h1v1h-1zM16 4h1v1h-1zM54 60h1v1h-1zM62 0h1v1h-1zM9 50h1v1h-1zM59 57h1v1h-1zM31 13h1v1h-1zM28 19h1v1h-1zM19 13h1v1h-1zM58 10h1v1h-1zM5 0h1v1h-1zM16 29h1v1h-1zM4 38h1v1h-1zM16 32h1v1h-1zM55 14h1v1h-1zM12 9h1v1h-1zM38 24h1v1h-1zM49 33h1v1h-1zM28 0h1v1h-1zM1 38h1v1h-1zM58 35h1v1h-1zM40 31h1v1h-1zM60 30h1v1h-1zM31 3h1v1h-1zM52 39h1v1h-1zM7 2h1v1h-1zM24 63h1v1h-1zM53 10h1v1h-1zM32 29h1v1h-1zM54 47h1v1h-1zM29 63h1v1h-1zM4 43h1v1h-1zM53 46h1v1h-1zM50 25h1v1h-1zM0 37h1v1h-1zM8 26h1v1h-1zM63 25h1v1h-1zM39 24h1v1h-1zM29 59h1v1h-1zM28 33h1v1h-1zM37 13h1v1h-1zM63 23h1v1h-1zM28 62h1v1h-1zM53 7h1v1h-1zM18 50h1v1h-1zM6 27h1v1h-1zM3 18h1v1h-1zM53 6h1v1h-1zM7 23h1v1h-1zM50 57h1v1h-1zM40 14h1v1h-1zM10 21h1v1h-1zM42 24h1v1h-1zM23 59h1v1h-1zM4 39h1v1h-1zM48 47h1v1h-1zM42 56h1v1h-1zM21 13h1v1h-1zM0 10h1v1h-1zM35 10h1v1h-1zM44 53h1v1h-1zM15 26h1v1h-1zM48 45h1v1h-1zM39 55h1v1h-1zM11 6h1v1h-1zM60 25h1v1h-1zM47 57h1v1h-1zM24 41h1v1h-1zM46 60h1v1h-1zM3 52h1v1h-1zM31 51h1v1h-1zM5 48h1v1h-1zM4 59h1v1h-1zM8 7h1v1h-1zM32 24h1v1h-1zM8 43h1v1h-1zM46 34h1v1h-1zM42 5h1v1h-1zM33 40h1v1h-1zM35 38h1v1h-1zM0 8h1v1h-1zM3 29h1v1h-1zM13 60h1v1h-1zM59 49h1v1h-1zM32 55h1v1h-1zM63 16h1v1h-1zM63 23h1v1h-1zM1 38h1v1h-1zM19 30h1v1h-1zM41 40h1v1h-1zM58 46h1v1h-1zM10 25h1v1h-1zM50 20h1v1h-1zM31 52h1v1h-1zM8 4h1v1h-1zM61 41h1v1h-1zM20 54h1v1h-1zM13 9h1v1h-1zM33 10h1v1h-1zM26 12h1v1h-1zM53 63h1v1h-1zM57 22h1v1h-1zM29 17h1v1h-1zM53 58h1v1h-1zM30 15h1v1h-1zM37 37h1v1h-1zM35 34h1v1h-1zM47 32h1v1h-1zM33 25h1v1h-1zM56 31h1v1h-1zM23 31h1v1h-1zM30 19h1v1h-1zM36 24h1v1h-1zM41 8h1v1h-1zM50 32h1v1h-1zM31 29h1v1h-1zM12 59h1v1h-1zM4 13h1v1h-1zM0 60h1v1h-1zM29 57h1v1h-1zM47 5h1v1h-1zM37 29h1v1h-1zM15 6h1v1h-1zM24 24h1v1h-1zM9 47h1v1h-1zM22 57h1v1h-1zM33 0h1v1h-1zM13 44h1v1h-1zM27 4h1v1h-1zM47 43h1v1h-1zM18 5h1v1h-1zM26 32h1v1h-1zM4 26h1v1h-1zM1 41h1v1h-1zM52 47h1v1h-1zM23 39h1v1h-1zM9 26h1v1h-1zM4 63h1v1h-1zM61 8h1v1h-1zM52 12h1v1h-1zM50 19h1v1h-1zM11 20h1v1h-1zM50 34h1v1h-1zM52 36h1v1h-1zM39 53h1v1h-1zM6 39h1v1h-1zM45 53h1v1h-1zM53 2h1v1h-1zM46 25h1v1h-1zM50 51h1v1h-1zM26 0h1v1h-1zM55 20h1v1h-1zM54 14h1v1h-1zM11 51h1v1h-1zM46 58h1v1h-1zM20 16h1v1h-1zM1 6h1v1h-1zM18 50h1v1h-1zM11 47h1v1h-1zM21 18h1v1h-1zM44 36h1v1h-1zM20 21h1v1h-1zM8 13h1v1h-1zM49 62h1v1h-1zM25 38h1v1h-1zM16 5h1v1h-1zM61 40h1v1h-1zM6 49h1v1h-1zM11 20h1v1h-1zM28 51h1v1h-1zM25 60h1v1h-1zM23 27h1v1h-1zM5 51h1v1h-1zM20 49h1v1h-1zM45 15h1v1h-1zM19 31h1v1h-1zM24 5h1v1h-1zM4 41h1v1h-1zM15 49h1v1h-1zM58 39h1v1h-1zM53 39h1v1h-1zM31 54h1v1h-1zM49 47h1v1h-1zM57 56h1v1h-1zM22 2h1v1h-1zM0 62h1v1h-1zM59 30h1v1h-1zM57 58h1v1h-1zM22 60h1v1h-1zM51 13h1v1h-1zM8 16h1v1h-1zM45 55h1v1h-1zM46 11h1v1h-1zM56 5h1v1h-1zM5 16h1v1h-1zM10 40h1v1h-1zM10 6h1v1h-1zM48 17h1v1h-1zM3 8h1v1h-1zM14 24h1v1h-1zM16 62h1v1h-1zM36 21h1v1h-1zM28 8h1v1h-1zM44 32h1v1h-1zM20 41h1v1h-1zM35 58h1v1h-1zM18 32h1v1h-1zM61 26h1v1h-1zM33 30h1v1h-1zM40 47h1v1h-1zM4 25h1v1h-1zM23 51h1v1h-1zM20 35h1v1h-1zM41 48h1v1h-1zM21 33h1v1h-1zM14 6h1v1h-1zM46 57h1v1h-1zM13 32h1v1h-1zM50 47h1v1h-1zM33 48h1v1h-1zM47 18h1v1h-1zM46 42h1v1h-1zM10 56h1v1h-1zM29 22h1v1h-1zM6 37h1v1h-1zM32 39h1v1h-1zM40 0h1v1h-1zM4 28h1v1h-1zM19 37h1v1h-1zM55 53h1v1h-1zM46 6h1v1h-1zM16 62h1v1h-1zM29 5h1v1h-1zM2 6h1v1h-1zM0 45h1v1h-1zM38 13h1v1h-1zM45 28h1v1h-1zM52 38h1v1h-1zM17 26h1v1h-1zM46 60h1v1h-1zM20 17h1v1h-1zM1 31h1v1h-1zM19 57h1v1h-1zM12 8h1v1h-1zM18 34h1v1h-1zM51 33h1v1h-1zM1 7h1v1h-1zM44 56h1v1h-1zM63 31h1v1h-1zM21 0h1v1h-1zM5 7h1v1h-1zM3 51h1v1h-1zM23 30h1v1h-1zM20 7h1v1h-1zM13 1h1v1h-1zM25 18h1v1h-1zM52 25h1v1h-1zM53 22h1v1h-1zM39 8h1v1h-1zM38 6h1v1h-1zM61 0h1v1h-1zM48 55h1v1h-1zM59 10h1v1h-1zM57 22h1v1h-1zM28 13h1v1h-1zM33 29h1v1h-1zM4 15h1v1h-1zM42 33h1v1h-1zM6 34h1v1h-1zM55 33h1v1h-1zM37 27h1v1h-1zM10 1h1v1h-1zM21 33h1v1h-1zM30 25h1v1h-1zM20 41h1v1h-1zM24 49h1v1h-1zM42 30h1v1h-1zM48 60h1v1h-1zM60 0h1v1h-1zM3 55h1v1h-1zM29 39h1v1h-1zM27 50h1v1h-1zM9 21h1v1h-1zM18 4h1v1h-1zM3 14h1v1h-1zM13 20h1v1h-1zM44 18h1v1h-1zM3 3h1v1h-1zM5 17h1v1h-1zM5 8h1v1h-1zM5 8h1v1h-1zM46 25h1v1h-1zM8 49h1v1h-1zM13 31h1v1h-1zM26 26h1v1h-1zM14 4h1v1h-1zM4 11h1v1h-1zM36 61h1v1h-1z"/></pattern>
<pattern id="ol" width="64" height="64" patternUnits="userSpaceOnUse"><rect width="64" height="64" fill="#5b7242"/><path fill="#ffff00" d="M12 16h1v1h-1zM12 26h1v1h-1zM37 40h1v1h-1zM43 54h1v1h-1zM33 2h1v1h-1zM44 32h1v1h-1zM36 6h1v1h-1zM47 41h1v1h-1zM60 36h1v1h-1zM3 52h1v1h-1zM3 55h1v1h-1zM12 44h1v1h-1zM60 6h1v1h-1zM27 11h1v1h-1zM36 21h1v1h-1zM55 0h1v1h-1zM25 36h1v1h-1zM6 0h1v1h-1zM44 62h1v1h-1zM12 62h1v1h-1zM23 63h1v1h-1zM44 33h1v1h-1zM20 36h1v1h-1zM27 29h1v1h-1zM63 21h1v1h-1zM14 10h1v1h-1zM62 13h1v1h-1zM41 45h1v1h-1zM12 51h1v1h-1zM50 11h1v1h-1zM54 3h1v1h-1zM47 26h1v1h-1zM38 33h1v1h-1zM54 21h1v1h-1zM48 29h1v1h-1zM58 16h1v1h-1zM4 44h1v1h-1zM41 19h1v1h-1zM57 41h1v1h-1zM21 59h1v1h-1zM56 32h1v1h-1zM29 16h1v1h-1zM42 59h1v1h-1zM30 24h1v1h-1zM34 38h1v1h-1zM19 19h1v1h-1zM31 41h1v1h-1zM44 20h1v1h-1zM30 41h1v1h-1zM24 33h1v1h-1zM13 21h1v1h-1zM13 25h1v1h-1zM49 19h1v1h-1zM18 38h1v1h-1zM38 55h1v1h-1zM35 25h1v1h-1zM13 13h1v1h-1zM35 26h1v1h-1zM49 59h1v1h-1zM4 1h1v1h-1zM51 55h1v1h-1zM28 37h1v1h-1zM59 2h1v1h-1zM18 32h1v1h-1zM51 0h1v1h-1zM31 55h1v1h-1zM53 29h1v1h-1zM29 23h1v1h-1zM15 58h1v1h-1zM55 40h1v1h-1zM33 12h1v1h-1zM53 31h1v1h-1zM51 20h1v1h-1zM32 54h1v1h-1zM61 58h1v1h-1zM2 52h1v1h-1zM23 41h1v1h-1zM1 49h1v1h-1zM62 13h1v1h-1zM4 32h1v1h-1zM27 20h1v1h-1zM25 44h1v1h-1zM12 58h1v1h-1zM26 60h1v1h-1zM2 47h1v1h-1zM43 52h1v1h-1zM58 26h1v1h-1zM23 50h1v1h-1zM15 45h1v1h-1zM7 32h1v1h-1zM35 48h1v1h-1zM51 7h1v1h-1zM1 9h1v1h-1zM53 53h1v1h-1zM45 33h1v1h-1zM13 28h1v1h-1zM38 51h1v1h-1zM28 50h1v1h-1zM59 27h1v1h-1zM21 16h1v1h-1zM8 24h1v1h-1zM60 28h1v1h-1zM18 45h1v1h-1zM52 59h1v1h-1zM37 16h1v1h-1zM60 45h1v1h-1zM29 34h1v1h-1zM48 32h1v1h-1zM54 23h1v1h-1zM61 0h1v1h-1zM35 45h1v1h-1zM31 38h1v1h-1zM41 61h1v1h-1zM62 54h1v1h-1zM10 46h1v1h-1zM19 38h1v1h-1zM49 7h1v1h-1zM10 41h1v1h-1zM17 44h1v1h-1zM1 1h1v1h-1zM26 9h1v1h-1zM37 32h1v1h-1zM12 18h1v1h-1zM29 23h1v1h-1zM57 44h1v1h-1zM19 26h1v1h-1zM51 21h1v1h-1zM11 38h1v1h-1zM25 63h1v1h-1zM27 10h1v1h-1zM56 14h1v1h-1zM15 33h1v1h-1zM53 29h1v1h-1zM17 60h1v1h-1zM63 7h1v1h-1zM61 59h1v1h-1zM18 62h1v1h-1zM31 63h1v1h-1zM21 0h1v1h-1zM20 41h1v1h-1zM59 63h1v1h-1zM37 59h1v1h-1zM47 54h1v1h-1zM53 9h1v1h-1zM23 46h1v1h-1zM3 2h1v1h-1zM5 42h1v1h-1zM12 61h1v1h-1zM62 18h1v1h-1zM4 27h1v1h-1zM53 16h1v1h-1zM43 12h1v1h-1zM46 43h1v1h-1zM60 26h1v1h-1zM36 55h1v1h-1zM43 54h1v1h-1zM32 6h1v1h-1zM37 37h1v1h-1zM45 63h1v1h-1zM51 42h1v1h-1zM34 44h1v1h-1zM26 63h1v1h-1zM15 42h1v1h-1zM24 40h1v1h-1zM38 16h1v1h-1zM11 5h1v1h-1zM51 51h1v1h-1zM6 51h1v1h-1zM38 13h1v1h-1zM0 5h1v1h-1zM24 60h1v1h-1zM7 48h1v1h-1zM18 10h1v1h-1zM27 5h1v1h-1zM58 22h1v1h-1zM12 23h1v1h-1zM4 53h1v1h-1zM12 1h1v1h-1zM47 17h1v1h-1zM39 33h1v1h-1zM38 23h1v1h-1zM53 4h1v1h-1zM40 2h1v1h-1zM55 6h1v1h-1zM63 5h1v1h-1zM15 53h1v1h-1zM51 57h1v1h-1zM8 1h1v1h-1zM49 19h1v1h-1zM60 52h1v1h-1zM13 10h1v1h-1zM60 27h1v1h-1zM19 1h1v1h-1zM54 0h1v1h-1zM1 15h1v1h-1zM11 27h1v1h-1zM15 16h1v1h-1zM60 2h1v1h-1zM35 31h1v1h-1zM57 23h1v1h-1zM6 46h1v1h-1zM18 10h1v1h-1zM37 63h1v1h-1zM58 32h1v1h-1zM6 4h1v1h-1zM1 7h1v1h-1zM1 10h1v1h-1zM49 39h1v1h-1zM39 21h1v1h-1zM62 7h1v1h-1zM40 47h1v1h-1zM56 60h1v1h-1zM21 18h1v1h-1zM14 46h1v1h-1zM20 53h1v1h-1zM61 49h1v1h-1zM57 34h1v1h-1zM42 37h1v1h-1zM35 7h1v1h-1zM42 1h1v1h-1zM19 39h1v1h-1zM54 31h1v1h-1zM48 49h1v1h-1zM48 29h1v1h-1zM57 36h1v1h-1zM0 41h1v1h-1zM33 34h1v1h-1zM54 20h1v1h-1zM5 36h1v1h-1zM18 18h1v1h-1zM35 63h1v1h-1zM44 10h1v1h-1zM62 48h1v1h-1zM25 29h1v1h-1zM39 7h1v1h-1zM50 59h1v1h-1zM26 32h1v1h-1zM1 49h1v1h-1zM58 11h1v1h-1zM45 8h1v1h-1zM29 50h1v1h-1zM33 41h1v1h-1zM61 25h1v1h-1zM24 27h1v1h-1zM24 11h1v1h-1zM23 37h1v1h-1zM46 45h1v1h-1zM51 19h1v1h-1zM31 5h1v1h-1zM63 47h1v1h-1zM13 47h1v1h-1zM59 10h1v1h-1zM19 40h1v1h-1zM3 44h1v1h-1zM35 2h1v1h-1zM12 4h1v1h-1zM26 62h1v1h-1zM27 33h1v1h-1zM35 54h1v1h-1zM12 57h1v1h-1zM16 32h1v1h-1zM4 43h1v1h-1zM25 23h1v1h-1zM48 10h1v1h-1zM3 6h1v1h-1zM4 47h1v1h-1zM58 62h1v1h-1zM8 50h1v1h-1zM15 11h1v1h-1zM32 40h1v1h-1zM29 11h1v1h-1zM50 23h1v1h-1zM57 20h1v1h-1zM47 30h1v1h-1zM28 22h1v1h-1zM4 32h1v1h-1zM45 7h1v1h-1zM3 6h1v1h-1zM33 61h1v1h-1zM7 12h1v1h-1zM18 40h1v1h-1zM0 25h1v1h-1zM38 56h1v1h-1zM13 60h1v1h-1zM41 47h1v1h-1zM32 49h1v1h-1zM15 47h1v1h-1zM61 48h1v1h-1zM21 56h1v1h-1zM30 18h1v1h-1zM1 59h1v1h-1zM24 4h1v1h-1zM20 28h1v1h-1zM9 47h1v1h-1zM17 57h1v1h-1zM12 49h1v1h-1zM2 9h1v1h-1zM57 43h1v1h-1zM41 29h1v1h-1zM61 14h1v1h-1zM46 18h1v1h-1zM42 28h1v1h-1zM7 23h1v1h-1zM57 18h1v1h-1zM56 19h1v1h-1zM34 53h1v1h-1zM52 31h1v1h-1zM19 3h1v1h-1zM34 37h1v1h-1zM42 21h1v1h-1zM33 62h1v1h-1zM13 40h1v1h-1zM58 61h1v1h-1zM14 19h1v1h-1zM7 27h1v1h-1zM61 36h1v1h-1zM15 32h1v1h-1zM25 46h1v1h-1zM55 33h1v1h-1zM30 30h1v1h-1zM12 49h1v1h-1zM37 53h1v1h-1zM20 7h1v1h-1zM37 18h1v1h-1zM2 56h1v1h-1zM43 17h1v1h-1zM56 0h1v1h-1zM36 23h1v1h-1zM46 55h1v1h-1zM5 52h1v1h-1zM27 35h1v1h-1zM23 17h1v1h-1zM23 29h1v1h-1zM22 25h1v1h-1zM10 11h1v1h-1zM63 35h1v1h-1zM22 26h1v1h-1zM17 24h1v1h-1zM39 25h1v1h-1zM1 8h1v1h-1zM52 7h1v1h-1zM44 42h1v1h-1zM36 63h1v1h-1zM11 1h1v1h-1zM52 61h1v1h-1zM17 34h1v1h-1zM31 23h1v1h-1zM46 4h1v1h-1zM20 47h1v1h-1zM0 45h1v1h-1zM57 9h1v1h-1zM15 45h1v1h-1zM31 41h1v1h-1zM48 7h1v1h-1zM37 13h1v1h-1zM63 57h1v1h-1zM3 17h1v1h-1zM2 31h1v1h-1zM11 28h1v1h-1zM23 21h1v1h-1zM13 39h1v1h-1zM32 3h1v1h-1zM2 12h1v1h-1zM24 33h1v1h-1zM2 59h1v1h-1zM30 56h1v1h-1zM13 44h1v1h-1zM12 22h1v1h-1zM5 34h1v1h-1zM15 59h1v1h-1zM63 35h1v1h-1zM14 15h1v1h-1zM15 51h1v1h-1zM17 29h1v1h-1zM29 18h1v1h-1zM59 50h1v1h-1zM21 2h1v1h-1zM49 53h1v1h-1zM4 50h1v1h-1zM6 46h1v1h-1zM43 51h1v1h-1zM30 42h1v1h-1zM55 41h1v1h-1zM51 6h1v1h-1zM41 18h1v1h-1zM45 31h1v1h-1zM54 1h1v1h-1zM46 13h1v1h-1zM23 8h1v1h-1zM41 55h1v1h-1zM25 2h1v1h-1zM28 17h1v1h-1zM53 50h1v1h-1zM58 5h1v1h-1zM5 4h1v1h-1zM34 34h1v1h-1zM4 12h1v1h-1zM32 15h1v1h-1zM1 55h1v1h-1zM30 5h1v1h-1zM36 14h1v1h-1zM39 44h1v1h-1zM21 15h1v1h-1zM7 34h1v1h-1zM10 59h1v1h-1zM18 56h1v1h-1zM15 16h1v1h-1zM37 52h1v1h-1zM36 35h1v1h-1zM31 11h1v1h-1zM36 58h1v1h-1zM28 49h1v1h-1zM25 46h1v1h-1zM58 38h1v1h-1zM61 60h1v1h-1zM39 3h1v1h-1zM31 42h1v1h-1zM28 24h1v1h-1zM49 50h1v1h-1zM1 45h1v1h-1zM20 30h1v1h-1zM41 41h1v1h-1zM62 34h1v1h-1zM36 27h1v1h-1zM37 7h1v1h-1zM2 20h1v1h-1zM8 44h1v1h-1zM56 7h1v1h-1zM49 56h1v1h-1zM45 13h1v1h-1zM28 19h1v1h-1zM53 43h1v1h-1zM45 17h1v1h-1zM25 35h1v1h-1zM12 60h1v1h-1zM34 16h1v1h-1zM52 13h1v1h-1zM0 52h1v1h-1zM15 63h1v1h-1zM50 19h1v1h-1zM53 35h1v1h-1zM14 48h1v1h-1zM57 58h1v1h-1zM36 45h1v1h-1zM37 45h1v1h-1zM50 49h1v1h-1zM41 0h1v1h-1zM63 48h1v1h-1zM56 38h1v1h-1zM23 38h1v1h-1zM18 55h1v1h-1zM48 29h1v1h-1zM11 42h1v1h-1zM41 31h1v1h-1zM41 26h1v1h-1zM54 1h1v1h-1zM3 6h1v1h-1zM32 63h1v1h-1zM38 39h1v1h-1zM55 55h1v1h-1zM49 59h1v1h-1zM45 5h1v1h-1zM44 57h1v1h-1zM1 8h1v1h-1zM29 12h1v1h-1zM52 47h1v1h-1zM51 19h1v1h-1zM24 53h1v1h-1zM62 51h1v1h-1zM56 43h1v1h-1zM11 21h1v1h-1zM46 40h1v1h-1zM46 9h1v1h-1zM39 22h1v1h-1zM14 37h1v1h-1zM43 53h1v1h-1zM20 37h1v1h-1zM26 24h1v1h-1zM52 23h1v1h-1zM7 13h1v1h-1zM45 5h1v1h-1zM52 1h1v1h-1zM0 39h1v1h-1zM0 38h1v1h-1zM50 12h1v1h-1zM1 3h1v1h-1zM25 22h1v1h-1zM63 34h1v1h-1zM18 25h1v1h-1zM52 15h1v1h-1zM18 20h1v1h-1zM13 3h1v1h-1zM12 9h1v1h-1zM21 62h1v1h-1zM59 55h1v1h-1zM7 1h1v1h-1zM41 18h1v1h-1zM30 45h1v1h-1zM35 21h1v1h-1zM4 34h1v1h-1zM12 8h1v1h-1zM44 24h1v1h-1zM57 49h1v1h-1zM2 6h1v1h-1zM28 50h1v1h-1zM5 56h1v1h-1zM6 30h1v1h-1zM31 28h1v1h-1zM5 20h1v1h-1zM22 40h1v1h-1zM0 58h1v1h-1zM38 53h1v1h-1zM32 63h1v1h-1zM8 31h1v1h-1zM49 28h1v1h-1zM52 39h1v1h-1zM51 62h1v1h-1zM2 31h1v1h-1zM11 22h1v1h-1zM21 45h1v1h-1zM48 23h1v1h-1zM0 37h1v1h-1zM50 46h1v1h-1zM14 42h1v1h-1zM49 42h1v1h-1zM51 8h1v1h-1zM15 54h1v1h-1zM44 31h1v1h-1zM49 24h1v1h-1zM59 36h1v1h-1zM44 30h1v1h-1zM55 4h1v1h-1zM35 3h1v1h-1zM43 19h1v1h-1zM30 16h1v1h-1zM11 25h1v1h-1zM34 16h1v1h-1zM56 59h1v1h-1zM30 20h1v1h-1zM47 45h1v1h-1zM27 51h1v1h-1zM48 26h1v1h-1zM38 60h1v1h-1zM26 29h1v1h-1zM57 16h1v1h-1zM33 56h1v1h-1zM47 31h1v1h-1zM51 27h1v1h-1zM16 15h1v1h-1zM11 34h1v1h-1zM49 3h1v1h-1zM18 39h1v1h-1zM1 49h1v1h-1zM11 22h1v1h-1zM29 41h1v1h-1zM24 13h1v1h-1zM8 46h1v1h-1zM38 24h1v1h-1zM8 39h1v1h-1zM11 28h1v1h-1zM36 16h1v1h-1zM51 36h1v1h-1zM45 51h1v1h-1zM59 16h1v1h-1zM35 22h1v1h-1zM3 46h1v1h-1zM44 52h1v1h-1zM3 59h1v1h-1zM31 51h1v1h-1zM45 12h1v1h-1zM23 37h1v1h-1zM14 34h1v1h-1zM28 5h1v1h-1zM51 5h1v1h-1zM20 55h1v1h-1zM25 38h1v1h-1zM19 48h1v1h-1zM5 39h1v1h-1zM22 29h1v1h-1zM63 32h1v1h-1zM55 44h1v1h-1zM0 14h1v1h-1zM36 5h1v1h-1zM6 31h1v1h-1zM14 4h1v1h-1zM40 26h1v1h-1zM44 11h1v1h-1zM53 50h1v1h-1zM28 35h1v1h-1zM11 44h1v1h-1zM54 56h1v1h-1zM43 57h1v1h-1zM6 26h1v1h-1zM54 16h1v1h-1zM62 24h1v1h-1zM5 33h1v1h-1zM22 20h1v1h-1zM30 33h1v1h-1zM31 7h1v1h-1zM21 45h1v1h-1z"/></pattern>
<radialGradient id="holeg" cx="0.7" cy="0.5" r="0.8"><stop offset="0" stop-color="#557846"/><stop offset="1" stop-color="#3c5631"/></radialGradient>
</defs>
<polygon points="497.7,347 680.3,366.8 683,358.2 685.4,356.2 715.6,359.6 718,362 724.2,410 738.6,520 753.2,640 757,668.5 758,679 725.7,799 700.9,797 700.9,790.3 690.4,786.5 691,777 689,773.5 636.8,768 469.4,443.6 470.4,438.4 473.5,433.6 462.2,413.7 474.3,371 490,372.8" fill="url(#dk)"/>
<polygon points="718,362 724.2,410 738.6,520 753.2,640 757,668.5 758,679 725.7,799 723.7,798 711.4,684.7 705,600 700,510 698.3,433 705.7,407 716.7,369.9" fill="url(#ol)"/>
<polygon points="497.7,347 680.3,366.8 683,358.2 685.4,356.2 715.6,359.6 718,362 716.7,369.9 705.7,407 698.3,433 690,479.5 653.4,477.3 652,466 469.4,443.6 470.4,438.4 473.5,433.6 462.2,413.7 474.3,371 490,372.8" fill="url(#lt)"/>
<polygon points="464.6,416.5 475.6,416.1 473.2,428.8" fill="url(#dk)"/>
<polygon points="716.7,369.9 705.7,407 719.4,405" fill="url(#dk)"/>
<polygon points="698.3,433 709.7,434 713,507 701.7,507.5" fill="url(#dk)"/>
<ellipse cx="644.5" cy="413.5" rx="19.5" ry="15.2" fill="url(#holeg)" stroke="#ff2a2a" stroke-width="1"/>
<ellipse cx="656.3" cy="507" rx="20" ry="15" fill="none" stroke="#ff2a2a" stroke-width="1"/>
<path d="M677,672.8 Q690,680 695,705 T702,789.5" fill="none" stroke="#ff2a2a" stroke-width="1"/>
<path d="M682,679.5 Q692,695 694,725 T695,777" fill="none" stroke="#ff2a2a" stroke-width="1"/>
<rect x="529.5" y="521" width="36.5" height="14.5" fill="#9fb5cf"/>
<g fill="none" stroke="#a06a35" stroke-width="1.05"><path transform="translate(532.50,523) scale(1,0.98)" d="M0,0 H3 L5.5,3 V8 L3,11 H0 Z"/><path transform="translate(540.70,523) scale(1,0.98)" d="M0,0 H5.5 M2.75,0 V11"/><path transform="translate(548.90,523) scale(1,0.98)" d="M0,11 V0 L3,7 L6,0 V11"/><path transform="translate(557.10,523) scale(1,0.98)" d="M0,1.5 Q2.5,-0.8 5,1.5 V4.5 L0,11 H5.5"/></g>
<rect x="702.6" y="459.6" width="23.6" height="12" fill="#a9c1dc"/>
<text x="703.5" y="470.5" font-family="Liberation Sans" font-size="10" font-weight="bold" fill="#ffffff" letter-spacing="0.2">所选的曲面</text>
<polyline points="497.7,347 680.3,366.8 683,358.2 685.4,356.2 715.6,359.6 718,362 724.2,410 738.6,520 753.2,640 757,668.5 758,679 725.7,799 700.9,797 700.9,790.3 690.4,786.5 691,777 689,773.5 636.8,768 469.4,443.6 470.4,438.4 473.5,433.6 462.2,413.7 474.3,371 490,372.8 497.7,347" fill="none" stroke="#ff2a2a" stroke-width="1.1" stroke-linejoin="round" shape-rendering="crispEdges"/>
<polyline points="469.4,443.6 652,466" fill="none" stroke="#ff2a2a" stroke-width="1" stroke-linejoin="round" shape-rendering="crispEdges"/>
<polyline points="653.4,477.3 682.2,479.3 690,479.5" fill="none" stroke="#ff2a2a" stroke-width="1" stroke-linejoin="round" shape-rendering="crispEdges"/>
<polyline points="462.2,413.7 464.6,416.5 475.6,416.1 473.2,428.8 464.6,416.5" fill="none" stroke="#ff2a2a" stroke-width="1" stroke-linejoin="round" shape-rendering="crispEdges"/>
<polyline points="475.6,416.1 491.4,445.3" fill="none" stroke="#ff2a2a" stroke-width="1" stroke-linejoin="round" shape-rendering="crispEdges"/>
<polyline points="474.3,371 490,372.8 497.7,347" fill="none" stroke="#ff2a2a" stroke-width="1" stroke-linejoin="round" shape-rendering="crispEdges"/>
<polyline points="477.5,444.2 626.374,739" fill="none" stroke="#ff2a2a" stroke-width="1" stroke-linejoin="round" shape-rendering="crispEdges"/>
<polyline points="480.5,444.2 629.374,739" fill="none" stroke="#ff2a2a" stroke-width="1" stroke-linejoin="round" shape-rendering="crispEdges"/>
<polyline points="489.5,444.2 638.374,739" fill="none" stroke="#ff2a2a" stroke-width="1" stroke-linejoin="round" shape-rendering="crispEdges"/>
<polyline points="492.5,444.2 641.374,739" fill="none" stroke="#ff2a2a" stroke-width="1" stroke-linejoin="round" shape-rendering="crispEdges"/>
<polyline points="627,739 643,740.4 636.8,768" fill="none" stroke="#ff2a2a" stroke-width="1" stroke-linejoin="round" shape-rendering="crispEdges"/>
<polyline points="474.3,371 636.3,695" fill="none" stroke="#ff2a2a" stroke-width="1" stroke-linejoin="round" shape-rendering="crispEdges"/>
<polyline points="479,371.5 640.75,695" fill="none" stroke="#ff2a2a" stroke-width="1" stroke-linejoin="round" shape-rendering="crispEdges"/>
<polyline points="484,372 645.5,695" fill="none" stroke="#ff2a2a" stroke-width="1" stroke-linejoin="round" shape-rendering="crispEdges"/>
<polyline points="490,372.8 651.1,695" fill="none" stroke="#ff2a2a" stroke-width="1" stroke-linejoin="round" shape-rendering="crispEdges"/>
<polyline points="636,695 655,698 663,671 676,671" fill="none" stroke="#ff2a2a" stroke-width="1" stroke-linejoin="round" shape-rendering="crispEdges"/>
<polyline points="636.8,716 642,695.7" fill="none" stroke="#ff2a2a" stroke-width="1" stroke-linejoin="round" shape-rendering="crispEdges"/>
<polyline points="497.7,347 663,671" fill="none" stroke="#ff2a2a" stroke-width="1" stroke-linejoin="round" shape-rendering="crispEdges"/>
<polyline points="652,466 674.3,640 691.4,777" fill="none" stroke="#ff2a2a" stroke-width="2.6" stroke-linejoin="round" shape-rendering="crispEdges"/>
<polyline points="625.3,417.8 634,507" fill="none" stroke="#ff2a2a" stroke-width="1" stroke-linejoin="round" shape-rendering="crispEdges"/>
<polyline points="664.2,417.8 675.8,507" fill="none" stroke="#ff2a2a" stroke-width="1" stroke-linejoin="round" shape-rendering="crispEdges"/>
<polyline points="680.3,366.8 705.7,640 719,685.7" fill="none" stroke="#ff2a2a" stroke-width="1" stroke-linejoin="round" shape-rendering="crispEdges"/>
<polyline points="685.4,356.2 711.4,640 719,685.7" fill="none" stroke="#ff2a2a" stroke-width="1" stroke-linejoin="round" shape-rendering="crispEdges"/>
<polyline points="689.9,356.6 715.2,640 719,685.7" fill="none" stroke="#ff2a2a" stroke-width="1" stroke-linejoin="round" shape-rendering="crispEdges"/>
<polyline points="694,357 719,640 719,685.7" fill="none" stroke="#ff2a2a" stroke-width="1" stroke-linejoin="round" shape-rendering="crispEdges"/>
<polyline points="698.8,357.5 722.8,640 719,685.7" fill="none" stroke="#ff2a2a" stroke-width="1" stroke-linejoin="round" shape-rendering="crispEdges"/>
<polyline points="716.7,369.9 705.7,407 719.4,405 716.7,369.9" fill="none" stroke="#ff2a2a" stroke-width="1" stroke-linejoin="round" shape-rendering="crispEdges"/>
<polyline points="698.3,433 709.7,434 713,507 701.7,507.5 698.3,433" fill="none" stroke="#ff2a2a" stroke-width="1" stroke-linejoin="round" shape-rendering="crispEdges"/>
<polyline points="688,682.5 719,683 759,679.6" fill="none" stroke="#ff2a2a" stroke-width="1" stroke-linejoin="round" shape-rendering="crispEdges"/>
<polyline points="660,671.4 679,673.3" fill="none" stroke="#ff2a2a" stroke-width="1" stroke-linejoin="round" shape-rendering="crispEdges"/>
<polyline points="711.4,684.7 723.7,798" fill="none" stroke="#ff2a2a" stroke-width="1" stroke-linejoin="round" shape-rendering="crispEdges"/>
<polyline points="715,362 721,410 735.5,520 750,640 754,668.5 755,679 722.7,798" fill="none" stroke="#ff2a2a" stroke-width="1" stroke-linejoin="round" shape-rendering="crispEdges"/>
<polyline points="525,537 488,204 316,367 358,694 525,537" fill="none" stroke="#72747d" stroke-width="1" shape-rendering="crispEdges"/>
<polyline points="510,658 280,518 321,844 400,893" fill="none" stroke="#72747d" stroke-width="1" shape-rendering="crispEdges"/>
<polyline points="510,662 540,893" fill="none" stroke="#72747d" stroke-width="1" shape-rendering="crispEdges"/>
<polyline points="445,726 604,575 832.2,714.5 661.5,877.6 438,743" fill="none" stroke="#a06a35" stroke-width="1" shape-rendering="crispEdges"/>
<g stroke="#a06a35" stroke-width="1.1" fill="none" shape-rendering="crispEdges"><path d="M245.2,784 L250.4,819.6 M226,785.2 L273.6,814.8 M226,818.8 L256.8,790"/></g>
<g stroke-width="1"><path d="M519,594.4 L517.5,579" stroke="#20e0e8"/><path d="M519,594.4 L500,583" stroke="#20d020"/><path d="M519,594.4 L535.6,579.3" stroke="#ff3030"/></g>
<circle cx="517.5" cy="578.7" r="2" fill="#20e0e8"/><circle cx="500" cy="582.8" r="1.6" fill="#20d020"/><circle cx="535.6" cy="579.3" r="1.8" fill="#ff3030"/>
<g fill="none" stroke="#a06a35" stroke-width="1.05"><path transform="translate(511.50,646.5) scale(1,1.0)" d="M0,0 H3 L5.5,3 V8 L3,11 H0 Z"/><path transform="translate(520.10,646.5) scale(1,1.0)" d="M0,0 H5.5 M2.75,0 V11"/><path transform="translate(528.70,646.5) scale(1,1.0)" d="M0,11 V0 L3,7 L6,0 V11"/><path transform="translate(537.30,646.5) scale(1,1.0)" d="M0.5,0 V11"/></g>
<g fill="none" stroke="#a06a35" stroke-width="1.05"><path transform="translate(433.50,727.5) scale(1,1.0)" d="M0,0 H3 L5.5,3 V8 L3,11 H0 Z"/><path transform="translate(442.20,727.5) scale(1,1.0)" d="M0,0 H5.5 M2.75,0 V11"/><path transform="translate(450.90,727.5) scale(1,1.0)" d="M0,11 V0 L3,7 L6,0 V11"/><path transform="translate(459.60,727.5) scale(1,1.0)" d="M0,1 Q2.5,-0.8 5,1.5 V4 L3.5,5.5 H2 M3.5,5.5 L5,7 V9.5 Q2.5,11.8 0,10"/></g>
<g fill="none" stroke="#a06a35" stroke-width="1.05"><path transform="translate(258.50,779) scale(1,1.05)" d="M5.5,1.5 Q3,-1 0.5,2 V9 Q3,12 5.5,9.5 V6.5 H3.5"/><path transform="translate(268.30,779) scale(1,1.05)" d="M5,1.2 Q2.5,-0.8 0.5,2 V9 Q2.5,11.8 5,9.5 V7 Q2.5,5 0.5,7"/></g>
<g fill="none" stroke="#7a7c84" stroke-width="1" shape-rendering="crispEdges"><path d="M242,774.5 H246 L242,781.5 H246"/><path d="M268,775 L272,779 M272,775 L268,779"/></g>
<rect x="663" y="826" width="206" height="62" fill="#d0dcec" opacity="0.5"/>
<path d="M688,864 C678,858 666,850 665,840 C664,831 672,828 681,829 C692,831 702,840 705,850 C707,857 705,862 702,866 C704,858 700,847 691,839 C682,832 673,831 669,837 C667,845 676,856 688,864 Z" fill="#5d88b0" opacity="0.85"/>
<path d="M694,861 C688,856 678,857 673,865 C671,870 674,873 679,873 C676,869 678,864 684,861 C688,860 692,860 694,861 Z" fill="#8aa8c6"/>
<path d="M696,859 C702,851 708,846 714,846 C720,846 722,852 721,860 C719,870 712,879 702,882 C697,884 694,880 692,875 C698,880 707,877 713,870 C718,863 719,852 714,849 C709,848 702,853 696,859 Z" fill="#c06a8a" opacity="0.85"/>
<text x="733" y="857" font-family="Liberation Serif" font-weight="bold" font-size="25" fill="#4c9a80" stroke="#4c9a80" stroke-width="1" letter-spacing="5">野火论坛</text>
<text x="721" y="881" font-family="Liberation Sans" font-size="16.3" fill="#6f9cba">www.proewildfire.cn</text>
</svg>
</body></html>
